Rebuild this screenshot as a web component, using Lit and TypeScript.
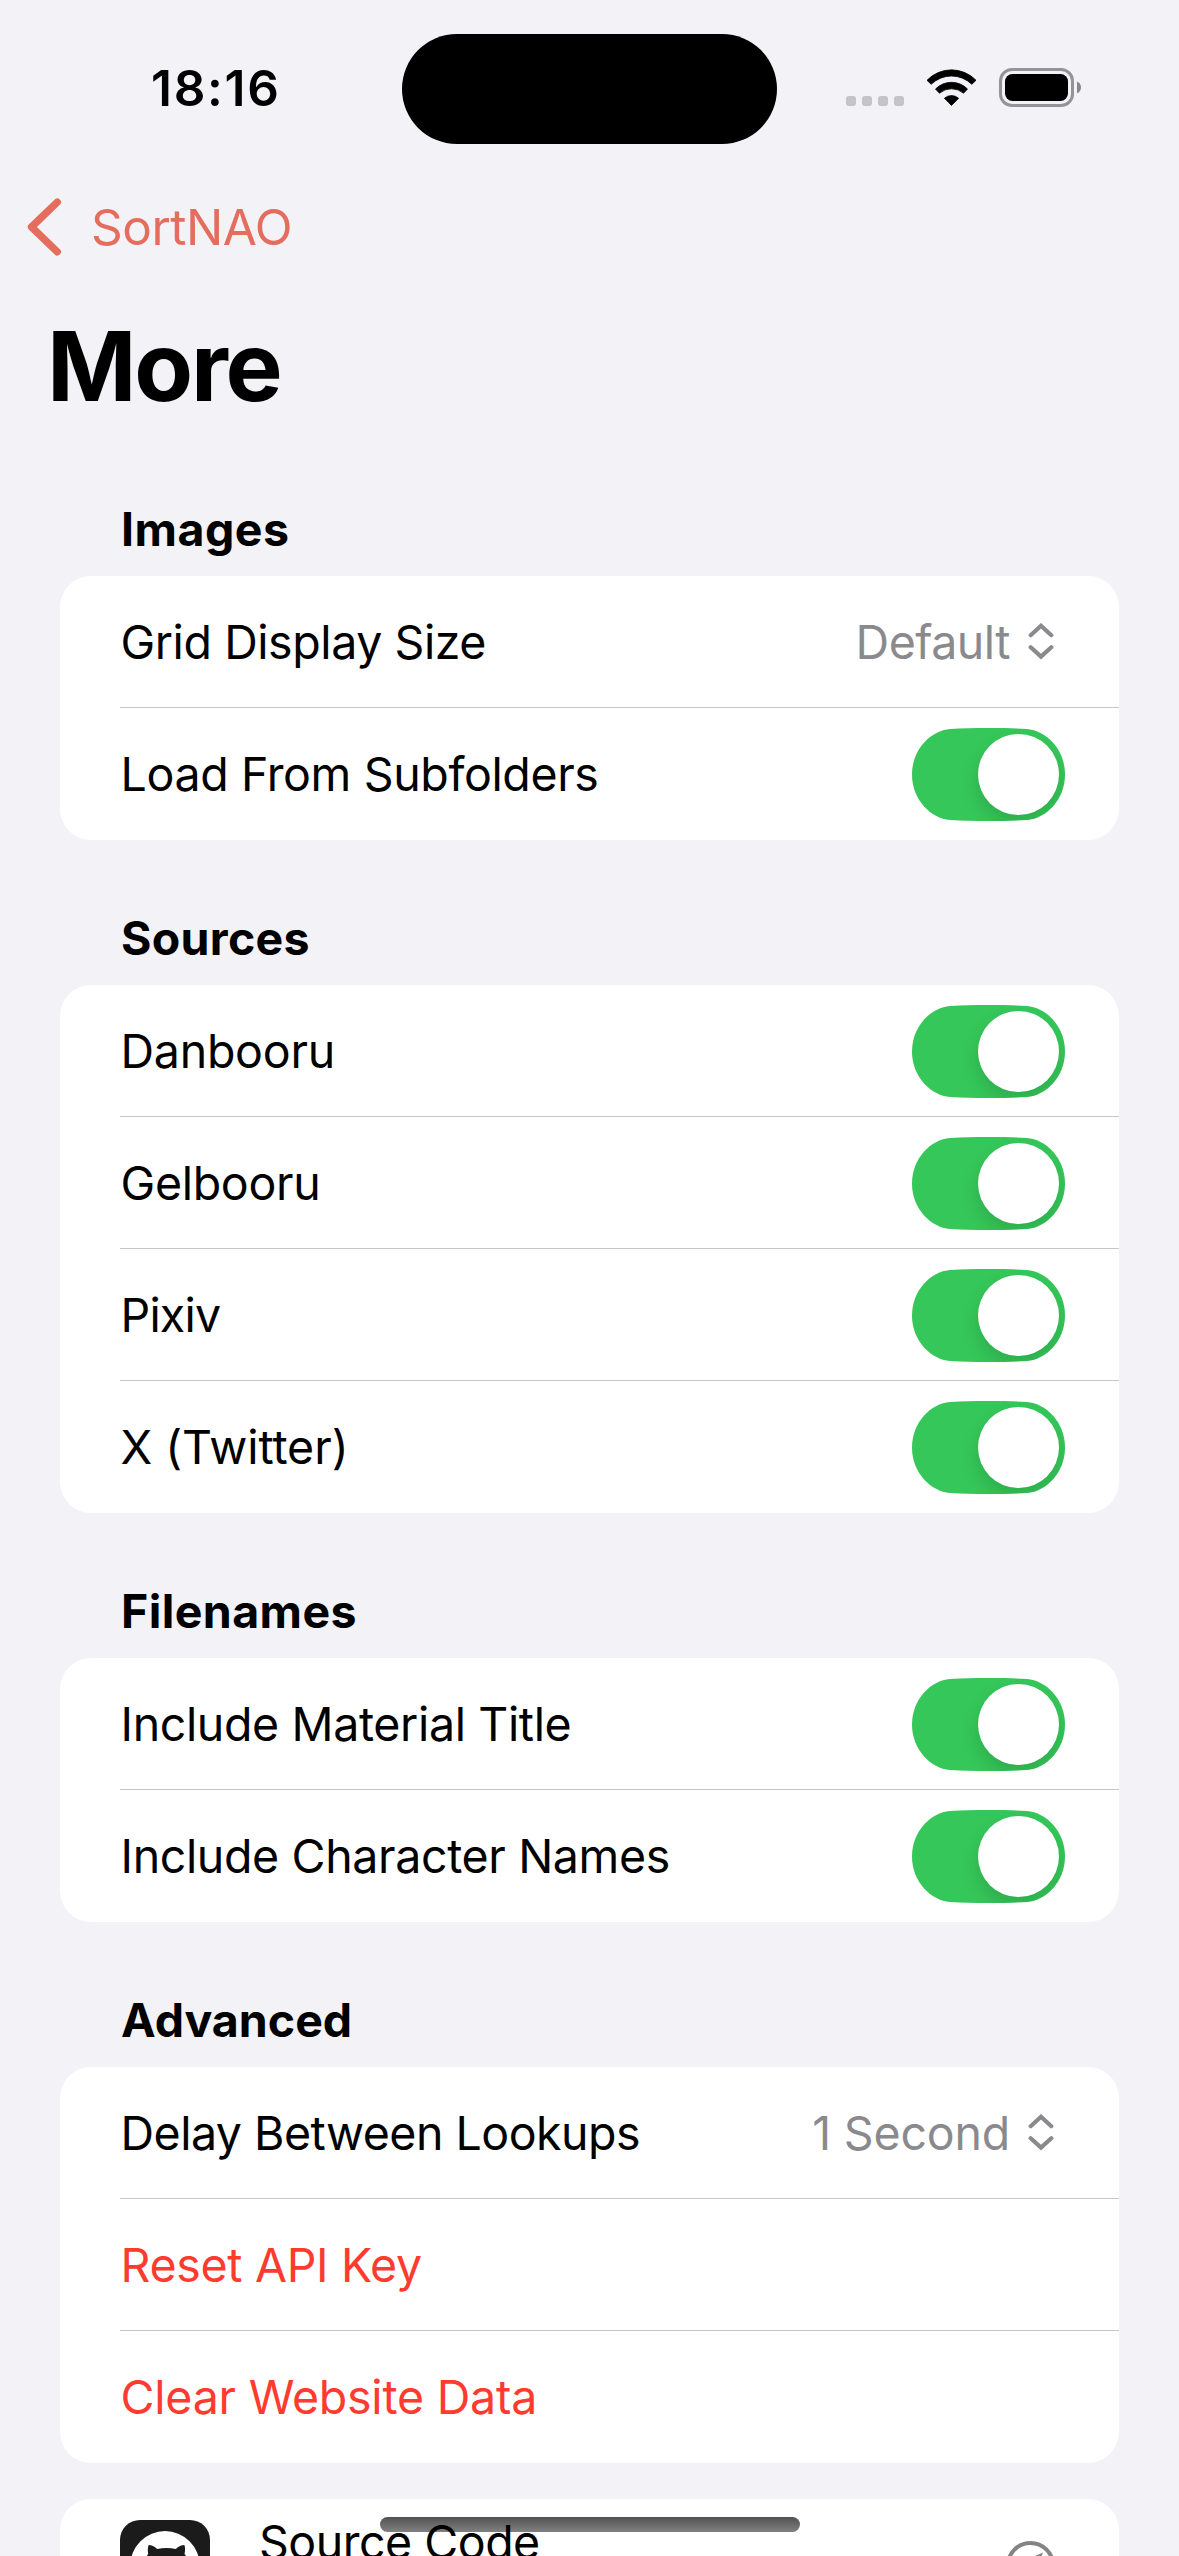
import { LitElement, html, css, svg, nothing } from "lit";
import { customElement, property } from "lit/decorators.js";
import { styleMap } from "lit/directives/style-map.js";

interface Row {
  label: string;
  spacing: number;
  kind: "toggle" | "picker" | "action";
  value?: string;
  valueSpacing?: number;
}

interface Section {
  title: string;
  spacing: number;
  rows: Row[];
}

const SECTIONS: Section[] = [
  {
    title: "Images",
    spacing: 0.5,
    rows: [
      { label: "Grid Display Size", spacing: -0.42, kind: "picker", value: "Default", valueSpacing: -0.5 },
      { label: "Load From Subfolders", spacing: -0.36, kind: "toggle" },
    ],
  },
  {
    title: "Sources",
    spacing: 0.3,
    rows: [
      { label: "Danbooru", spacing: -0.25, kind: "toggle" },
      { label: "Gelbooru", spacing: -0.3, kind: "toggle" },
      { label: "Pixiv", spacing: -0.8, kind: "toggle" },
      { label: "X (Twitter)", spacing: -0.05, kind: "toggle" },
    ],
  },
  {
    title: "Filenames",
    spacing: 0.4,
    rows: [
      { label: "Include Material Title", spacing: -0.36, kind: "toggle" },
      { label: "Include Character Names", spacing: -0.36, kind: "toggle" },
    ],
  },
  {
    title: "Advanced",
    spacing: 0,
    rows: [
      { label: "Delay Between Lookups", spacing: -0.5, kind: "picker", value: "1 Second", valueSpacing: -0.2 },
      { label: "Reset API Key", spacing: -0.32, kind: "action" },
      { label: "Clear Website Data", spacing: -0.22, kind: "action" },
    ],
  },
];

const tracking = (px: number) => styleMap({ letterSpacing: `${px}px` });

const TRACK = svg`<path d="M0 46.5C0 21 19 2.5 38 1C50 .2 62 0 76.5 0C91 0 103 .2 115 1C134 2.5 153 21 153 46.5C153 72 134 90.5 115 92C103 92.8 91 93 76.5 93C62 93 50 92.8 38 92C19 90.5 0 72 0 46.5Z"/>`;

@customElement("ui-switch")
export class UiSwitch extends LitElement {
  static styles = css`
    :host { display: block; width: 153px; height: 93px; }
    .art { display: block; overflow: visible; }
    .track { fill: #35c759; }
    .knob { fill: #fff; }
    .shade { fill: #000; opacity: 0.13; }
  `;

  render() {
    return html`
      <svg class="art" width="153" height="93" viewBox="0 0 153 93">
        <defs>
          <clipPath id="track">${TRACK}</clipPath>
          <filter id="soft" x="-50%" y="-50%" width="200%" height="200%">
            <feGaussianBlur stdDeviation="9" />
          </filter>
        </defs>
        <g class="track">${TRACK}</g>
        <g clip-path="url(#track)">
          <circle class="shade" cx="106.5" cy="55.5" r="41" filter="url(#soft)" />
        </g>
        <circle class="knob" cx="106.5" cy="46.5" r="40.5" />
      </svg>
    `;
  }
}

@customElement("status-bar")
export class StatusBar extends LitElement {
  static styles = css`
    :host { display: block; }
    .bar { display: flex; align-items: center; height: 177px; }
    .time {
      box-sizing: border-box;
      width: 402px;
      padding-left: 151px;
      padding-bottom: 2px;
      font-size: 49.5px;
      font-weight: 600;
      letter-spacing: 1.7px;
    }
    .island { width: 375px; height: 110px; border-radius: 55px; background: #000; margin: 1px 69px 0 0; }
    .dots { display: flex; gap: 6px; margin-right: 22px; padding-top: 25px; }
    .dot { width: 10px; height: 10px; border-radius: 3px; background: #c4c3c8; }
    .wifi { display: block; margin: 0 22px 2px 0; }
    .battery { display: block; margin-bottom: 2px; }
  `;

  render() {
    return html`
      <div class="bar">
        <div class="time">18:16</div>
        <div class="island"></div>
        <div class="dots">${[0, 1, 2, 3].map(() => html`<span class="dot"></span>`)}</div>
        <svg class="wifi" width="51" height="39" viewBox="0 0 51 39">
          <g stroke="#000" stroke-width=".8" stroke-linejoin="round">
            <path d="M1 12.3A34 34 0 0 1 50 12.3L45.8 16.3A29 29 0 0 0 5.2 16.3Z" />
            <path d="M9.5 21A22.5 22.5 0 0 1 41.5 21L37.5 25.2A18.5 18.5 0 0 0 13.5 25.2Z" />
            <path d="M18.4 30.3A10.5 10.5 0 0 1 32.6 30.3L25.5 37.4Z" />
          </g>
        </svg>
        <svg class="battery" width="83" height="39" viewBox="0 0 83 39">
          <rect x="1.5" y="1.5" width="72" height="36" rx="11.5" fill="none" stroke="#949397" stroke-width="3" />
          <rect x="6" y="6" width="63" height="27" rx="7.5" />
          <path d="M78 13.5C80.5 14.5 82 16.7 82 19.4S80.5 24.3 78 25.3Z" fill="#88878b" />
        </svg>
      </div>
    `;
  }
}

@customElement("settings-row")
export class SettingsRow extends LitElement {
  @property({ attribute: false }) row!: Row;
  @property({ type: Boolean }) last = false;

  static styles = css`
    :host { display: block; }
    .row {
      box-sizing: border-box;
      display: flex;
      align-items: center;
      height: 132px;
      margin-left: 60px;
      padding-right: 54px;
      box-shadow: inset 0 -1px 0 #c6c6c8;
    }
    .row.last { box-shadow: none; }
    .row.picker { padding-right: 65px; }
    .label { flex: 1; padding-left: 0.5px; white-space: nowrap; }
    .action .label { color: #ff3b30; }
    .value { color: #8a8a8e; margin-right: 18px; white-space: nowrap; }
    .updown { display: block; fill: none; stroke: #8a8a8e; stroke-width: 4.2; stroke-linecap: round; }
  `;

  render() {
    const { row } = this;
    return html`
      <div class="row ${row.kind} ${this.last ? "last" : ""}">
        <span class="label" style=${tracking(row.spacing)}>${row.label}</span>
        ${row.kind === "picker"
          ? html`
              <span class="value" style=${tracking(row.valueSpacing ?? 0)}>${row.value}</span>
              <svg class="updown" width="26" height="38" viewBox="0 0 26 38">
                <path d="M2.7 12.2L13 2.8L23.3 12.2M2.7 24.2L13 33.6L23.3 24.2" />
              </svg>
            `
          : nothing}
        ${row.kind === "toggle" ? html`<ui-switch></ui-switch>` : nothing}
      </div>
    `;
  }
}

@customElement("app-root")
export class AppRoot extends LitElement {
  static styles = css`
    :host {
      display: block;
      position: relative;
      width: 1179px;
      height: 2556px;
      overflow: hidden;
      background: #f2f2f7;
      color: #000;
      font-family: Inter, "Liberation Sans", sans-serif;
      font-size: 46.5px;
      line-height: normal;
    }
    .nav {
      display: flex;
      align-items: center;
      height: 100px;
      padding-left: 27px;
      color: #e46d5d;
      font-size: 49.5px;
      letter-spacing: -0.5px;
    }
    .back { display: block; margin-right: 29px; }
    .title {
      box-sizing: border-box;
      height: 154px;
      margin: 0;
      padding: 31px 0 0 47px;
      font-size: 96px;
      font-weight: 700;
      line-height: 116px;
      letter-spacing: -2.2px;
    }
    .content { padding: 0 60px; }
    .heading {
      box-sizing: border-box;
      height: 145px;
      margin: 0;
      padding: 68px 0 0 61px;
      font-size: 46.5px;
      font-weight: 700;
      line-height: 60px;
    }
    .card { border-radius: 31px; background: #fff; }
    .links {
      display: flex;
      align-items: flex-start;
      height: 132px;
      margin-top: 36px;
      padding-left: 60px;
      padding-right: 61px;
    }
    .repo-icon { display: block; margin: 21px 49px 0 0; }
    .repo-label {
      position: relative;
      z-index: 2;
      flex: 1;
      padding-top: 14px;
      line-height: 58px;
      letter-spacing: -0.49px;
    }
    .compass { display: block; margin-top: 41px; }
    .home-indicator {
      position: absolute;
      z-index: 1;
      left: 380px;
      top: 2517px;
      width: 420px;
      height: 15px;
      border-radius: 8px;
      background: linear-gradient(#525252, #808080);
    }
  `;

  render() {
    return html`
      <status-bar></status-bar>
      <div class="nav">
        <svg class="back" width="35" height="60" viewBox="0 0 35 60" fill="none" stroke="#e46d5d" stroke-width="7.4" stroke-linecap="round" stroke-linejoin="round">
          <path d="M30.3 5.2L4.5 30L30.3 54.8" />
        </svg>
        <span>SortNAO</span>
      </div>
      <h1 class="title">More</h1>
      <div class="content">
        ${SECTIONS.map(
          (s) => html`
            <h2 class="heading" style=${tracking(s.spacing)}>${s.title}</h2>
            <div class="card">
              ${s.rows.map((r, i) => html`<settings-row .row=${r} ?last=${i === s.rows.length - 1}></settings-row>`)}
            </div>
          `,
        )}
        <div class="card links">
          <svg class="repo-icon" width="90" height="90" viewBox="0 0 90 90">
            <rect width="90" height="90" rx="20" fill="#1b1b1b" />
            <circle cx="45" cy="45.7" r="34.7" fill="#fff" />
            <path d="M28.6 25C31.5 25 34.5 26.6 37.2 29Q46.5 27.2 55.8 29C58.5 26.6 61.5 25 64.4 25C65.4 28 65.2 31 64.5 34C68 38 69 43 68 49C66 58 60 61 53 62V78H38V62C31 61 25 58 24 49C23.5 43 25 38 28.2 34C27.6 31 27.6 28 28.6 25Z" fill="#1b1b1b" />
          </svg>
          <span class="repo-label">Source Code</span>
          <svg class="compass" width="54" height="54" viewBox="0 0 54 54">
            <circle cx="26.5" cy="25.7" r="22.7" fill="none" stroke="#848484" stroke-width="4" />
            <path d="M39 12.5L20.5 20.5L14 38L32.5 30Z" fill="#848484" />
          </svg>
        </div>
      </div>
      <div class="home-indicator"></div>
    `;
  }
}
